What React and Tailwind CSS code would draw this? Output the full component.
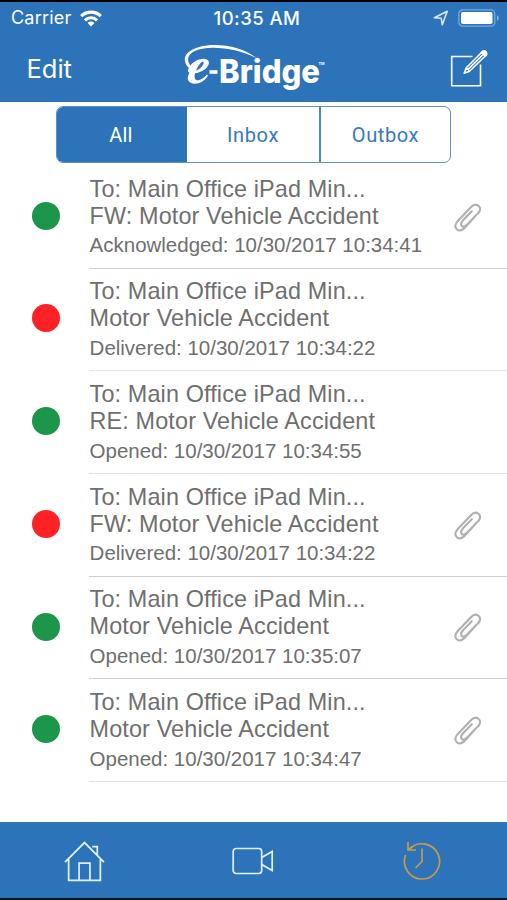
import React from "react";

const messages = [
  { id: 1, status: "ok", subject: "FW: Motor Vehicle Accident", state: "Acknowledged: 10/30/2017 10:34:41", file: true, line: "border-[#cfcfcf]" },
  { id: 2, status: "alert", subject: "Motor Vehicle Accident", state: "Delivered: 10/30/2017 10:34:22", file: false, line: "border-[#e6e6e6]" },
  { id: 3, status: "ok", subject: "RE: Motor Vehicle Accident", state: "Opened: 10/30/2017 10:34:55", file: false, line: "border-[#e2e2e2]" },
  { id: 4, status: "alert", subject: "FW: Motor Vehicle Accident", state: "Delivered: 10/30/2017 10:34:22", file: true, line: "border-[#cfcfcf]" },
  { id: 5, status: "ok", subject: "Motor Vehicle Accident", state: "Opened: 10/30/2017 10:35:07", file: true, line: "border-[#cfcfcf]" },
  { id: 6, status: "ok", subject: "Motor Vehicle Accident", state: "Opened: 10/30/2017 10:34:47", file: true, line: "border-[#e2e2e2]" },
];

function StatusBar() {
  return (
    <div className="grid h-8 grid-cols-3 items-center text-[18px] leading-8">
      <div className="flex items-center gap-[9px] pl-[11px]">
        <span className="tracking-[0.200px]">Carrier</span>
        <svg width="22" height="17" viewBox="0 0 22 16" fill="none" stroke="currentColor" strokeWidth="3.1">
          <path d="M1.2 5.6a14 14 0 0 1 19.6 0" />
          <path d="M4.9 9.8a8.6 8.6 0 0 1 12.2 0" />
          <path d="M11 16 7.600 12.500a4.800 4.800 0 0 1 6.800 0z" fill="currentColor" stroke="none" />
        </svg>
      </div>
      <div className="pl-[7px] text-center text-[18.500px] font-medium tracking-[0.450px] whitespace-nowrap">10:35 AM</div>
      <div className="flex items-center justify-end gap-[9px] pr-[8px]">
        <svg width="16" height="16" viewBox="0 0 16 16" fill="none" stroke="#d6e8f8" strokeWidth="1.6" strokeLinejoin="round">
          <path d="M14.200 1.200 1.400 7.800 8.200 8.200 9.300 14.800z" />
        </svg>
        <svg width="41" height="18" viewBox="0 0 41 18" fill="none">
          <rect x=".8" y=".8" width="36" height="16.4" rx="4" stroke="#79a9d8" strokeWidth="1.3" />
          <rect x="3" y="3" width="31.500" height="12" rx="1.8" fill="white" />
          <path d="M39 6.3q1.7.6 1.7 2.7T39 11.7z" fill="#8fb8df" />
        </svg>
      </div>
    </div>
  );
}

function Logo() {
  return (
    <svg width="144" height="54" viewBox="0 0 144 54" fill="white" role="img" aria-label="e-Bridge">
      <path d="M6.500 26.500C-1.500 19 0 9.500 16 4.900C35 .4 59 4.500 73.500 16.200C56 7.200 34 3.900 18 6.900C4 10.100 2.500 18 8.200 24.500z" />
      <path transform="translate(0 2.500)" fillRule="evenodd" d="M6 23.500C9 17.300 16 13.700 22 14.400C28 15.200 26.500 21.500 21.500 25C18.400 27.200 15 28.500 12.100 28.800C10.500 34 12.500 37.200 17 35.300C20 34 22 32.200 24 30L25 31.200C21.500 36.500 17 39.200 11.800 39.200C5 39.200 3 34 6.500 28.200C4.400 27.500 4.500 25.500 6 23.500zM13.100 26.300C17.500 24.700 21 20.500 20.700 17.600C20.300 15 15 20 13.100 26.300z" />
      <rect x="26.500" y="28.200" width="8" height="3.600" />
      <text x="36" y="41.200" fontSize="32.500" fontWeight="800" fontFamily="Inter, 'Liberation Sans', sans-serif" textLength="101" lengthAdjust="spacingAndGlyphs">Bridge</text>
      <text x="135.500" y="22.500" fontSize="4.200" fontWeight="700" fontFamily="'Liberation Sans', sans-serif">TM</text>
    </svg>
  );
}

function ComposeIcon() {
  return (
    <svg width="40" height="40" viewBox="0 0 40 40" fill="none" stroke="white" strokeWidth="1.600">
      <path d="M23.500 7.500H2.700V36.800H31.500V15.500" />
      <path d="M15.200 24.200 17.300 18.700 33.300 2.700Q35.500 1.300 37 3.200T36.700 6.500L20.600 22.300zM17.300 18.700l3.300 3.600M18.900 20.600 34.600 5" strokeLinejoin="round" />
      <path d="m32.300 3.700 3.900 3.500Q38.500 5 37 3T33.500 2.500z" fill="white" />
    </svg>
  );
}

function Paperclip() {
  return (
    <svg width="28" height="30" viewBox="0 0 28 30" fill="none" stroke="#b0b0b0" strokeWidth="2.100" strokeLinecap="round">
      <path d="M22.500 11.800 11.900 23.500C9.500 26.200 6 28.900 3.100 26.500C0 23.900 1.500 20.500 4 17.800L16.700 4.500C19 2.100 22.200.7 24.700 3C27.100 5.300 26 8.200 23.800 10.700M22.500 11.800 13.700 20.900C11.800 22.900 9.500 24.500 7.900 22.900C6.200 21.300 7.300 19.100 9 17.200L17.800 8.200" />
    </svg>
  );
}

function MessageRow({ message }) {
  const dot = message.status === "ok" ? "bg-[#1c964b]" : "bg-[#fe2126]";
  return (
    <li className="flex h-[102.700px] pl-8">
      <div className={`mt-[35.800px] h-7 w-7 shrink-0 rounded-full ${dot}`} />
      <div className={`ml-[29px] flex flex-1 border-b-[1.500px] pt-[9.700px] ${message.line}`}>
        <div className="flex-1 pl-[0.600px] text-[23.400px] leading-[27px] tracking-[0.130px] whitespace-nowrap text-[#6f6f6f]">
          <div>To: Main Office iPad Min...</div>
          <div>{message.subject}</div>
          <div className="mt-[3.500px] text-[20.500px] leading-6 tracking-[-0.010px]">{message.state}</div>
        </div>
        <div className="w-[53px] shrink-0 pt-[27px]">{message.file && <Paperclip />}</div>
      </div>
    </li>
  );
}

function TabBar() {
  return (
    <nav className="grid h-[78px] grid-cols-3 border-b-2 border-[#07131f] bg-[#2d73b9] text-[#e1f1ff]">
      <button className="flex items-center justify-center">
        <svg width="43" height="43" viewBox="0 0 42 42" fill="none" stroke="currentColor" strokeWidth="1.700">
          <path d="M2 22.500 21 3.500 40 22.500M5.500 19.500V40.500H36.500V19.500M15.700 40.500V23.500H26.300V40.500M28.500 7.500H33.500V15.500" />
        </svg>
      </button>
      <button className="flex items-center justify-center pt-0.5 pr-px">
        <svg width="42" height="28" viewBox="0 0 42 28" fill="none" stroke="currentColor" strokeWidth="1.700">
          <rect x="1.200" y="1.500" width="28.500" height="25" rx="3" />
          <path d="M29.700 10.500 40.200 4.500V23.500L29.700 17.500" />
        </svg>
      </button>
      <button className="flex items-center justify-center pt-0.5 pr-[2px] text-[#c99a4b]">
        <svg width="40" height="40" viewBox="0 0 40 40" fill="none" stroke="currentColor" strokeWidth="1.700">
          <path d="M7.300 8.200A17.600 17.600 0 1 1 3.600 14" />
          <path d="M6 1V9H14M6 9l4.500-3.500M20 7.500V20.500L13.500 27" />
        </svg>
      </button>
    </nav>
  );
}

export default function App() {
  return (
    <div className="flex h-[900px] w-[507px] flex-col overflow-hidden bg-white font-['Liberation_Sans',sans-serif]">
      <header className="h-[102px] shrink-0 border-t-2 border-black bg-[#2d73b9] font-['Inter','Liberation_Sans',sans-serif] text-white">
        <StatusBar />
        <div className="flex h-[68px] items-start pr-[18px] pl-[26.500px]">
          <button className="mt-[17px] w-[156px] text-left text-[25.500px] leading-9">Edit</button>
          <div className="mt-[8px]"><Logo /></div>
          <button className="mt-[14.500px] ml-auto"><ComposeIcon /></button>
        </div>
      </header>

      <div className="mt-1 ml-14 grid h-[57px] w-[395px] shrink-0 grid-cols-[130px_134px_1fr] overflow-hidden rounded-[7px] border-[1.500px] border-[#5b92ca] font-['Roboto','Liberation_Sans',sans-serif] text-[20px] tracking-[0.600px] text-[#3879bb]">
        <button className="bg-[#2d73b9] pr-0.5 tracking-[0.200px] text-white">All</button>
        <button className="border-r-2 border-[#4a87c4]">Inbox</button>
        <button>Outbox</button>
      </div>

      <ul className="mt-[3px] flex-1">
        {messages.map((m) => (
          <MessageRow key={m.id} message={m} />
        ))}
      </ul>

      <TabBar />
    </div>
  );
}
